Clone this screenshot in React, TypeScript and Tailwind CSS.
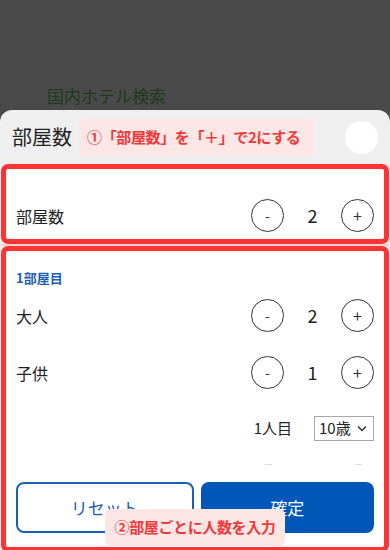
const font = "font-['Noto_Sans_CJK_JP','Noto_Sans',sans-serif]";

const Counter = ({ value }: { value: number }) => (
  <div className="flex items-center">
    <button className="w-[33px] h-[33px] rounded-full border border-[#333] flex items-center justify-center text-[14px] text-[#333] leading-none pb-[2px]">
      -
    </button>
    <span className="w-[57px] text-center text-[18px] text-[#222]">{value}</span>
    <button className="w-[33px] h-[33px] rounded-full border border-[#333] flex items-center justify-center text-[16px] text-[#333] leading-none pb-[2px]">
      +
    </button>
  </div>
);

const Row = ({ label, value }: { label: string; value: number }) => (
  <div className="flex items-center justify-between h-[33px]">
    <span className="text-[16px] text-[#222]">{label}</span>
    <Counter value={value} />
  </div>
);

export default function App() {
  return (
    <div className={`relative w-[390px] h-[550px] overflow-hidden bg-[#4a4a4a] ${font}`}>
      {/* page behind the overlay */}
      <div className="h-[110px] pl-[47px] pt-[84px] text-[17px] leading-[24px] text-[#1d3a1d]">
        国内ホテル検索
      </div>

      {/* bottom sheet */}
      <div className="h-[440px] rounded-t-[12px] bg-[#efefef] px-[1px]">
        <div className="flex items-center h-[54px] pl-[11px] pr-[11px]">
          <span className="text-[20px] text-[#222]">部屋数</span>
          <div className="ml-[7px] h-[37px] w-[234px] rounded-[4px] bg-[#fde6e6] flex items-center pl-[8px] text-[15px] font-bold text-[#f03a3a] tracking-tight">
            ①「部屋数」を「＋」で2にする
          </div>
          <div className="ml-auto w-[33px] h-[33px] rounded-full bg-white" />
        </div>

        <div className="h-[80px] border-[5px] border-[#ff3333] rounded-[7px] bg-white px-[10px] pt-[30px]">
          <Row label="部屋数" value={2} />
        </div>

        <div className="h-[2px] bg-[#f5d2d2]" />

        <div className="h-[306px] border-[5px] border-[#ff3333] rounded-[7px] bg-white px-[10px] pt-[18px]">
          <div className="text-[13px] leading-[18px] font-bold text-[#1a5fb4]">1部屋目</div>
          <div className="mt-[12px]">
            <Row label="大人" value={2} />
          </div>
          <div className="mt-[24px]">
            <Row label="子供" value={1} />
          </div>
          <div className="mt-[27px] flex items-center justify-end h-[25px]">
            <span className="text-[15px] text-[#222]">1人目</span>
            <div className="ml-[22px] w-[60px] h-[25px] border border-[#aaa] flex items-center justify-between pl-[4px] pr-[6px] text-[15px] text-[#222]">
              <span>10歳</span>
              <svg width="10" height="7" viewBox="0 0 10 7" fill="none">
                <path d="M1 1.5l4 4 4-4" stroke="#333" strokeWidth="1.5" />
              </svg>
            </div>
          </div>
          <div className="mt-[23px] flex justify-end h-[1px]">
            <div className="w-[7px] h-[1px] bg-[#ddd]" />
            <div className="ml-[83px] mr-[12px] w-[7px] h-[1px] bg-[#ddd]" />
          </div>
          <div className="mt-[17px] flex gap-[7px]">
            <button className="flex-1 h-[51px] rounded-[8px] border-2 border-[#1a5fb4] bg-white text-[17px] text-[#1a5fb4]">
              リセット
            </button>
            <button className="flex-1 h-[51px] rounded-[8px] bg-[#0057b7] text-[17px] text-white">
              確定
            </button>
          </div>
        </div>
      </div>

      <div className="absolute left-[105px] top-[509px] w-[180px] h-[37px] rounded-[6px] bg-[#fde6e6] flex items-center justify-center text-[15px] font-bold text-[#f03a3a] tracking-tight">
        ②部屋ごとに人数を入力
      </div>
    </div>
  );
}
